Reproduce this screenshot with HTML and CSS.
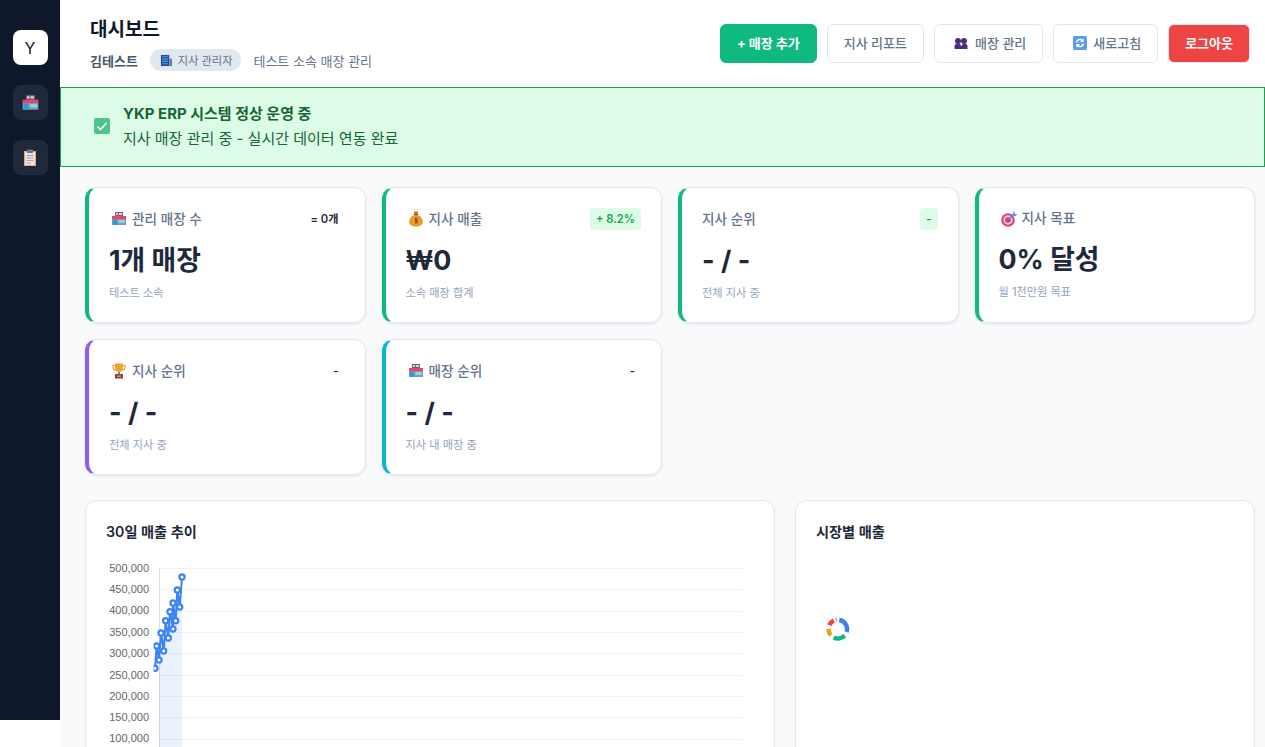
FILE: index.html
```html
<!DOCTYPE html>
<html lang="ko">
<head>
<meta charset="utf-8">
<title>대시보드</title>
<link rel="stylesheet" href="styles.css">
</head>
<body>
<svg class="defs" width="0" height="0" aria-hidden="true">
  <symbol id="i-store" viewBox="0 0 20 16">
    <rect x="6" y="1" width="8" height="4" fill="#6f6478"/>
    <rect x="7" y="2" width="2" height="2" fill="#d9d4dd"/><rect x="10" y="2" width="3" height="2" fill="#d9d4dd"/>
    <rect x="3" y="5" width="14" height="3" fill="#f0416c"/>
    <rect x="3" y="8" width="14" height="6" fill="#8f93a6"/>
    <rect x="4" y="8.500" width="4" height="5.500" fill="#1f9fe0"/>
    <rect x="9.500" y="9" width="6.500" height="3" fill="#74dcf4"/>
  </symbol>
  <symbol id="i-bag" viewBox="0 0 20 16">
    <rect x="8" y="0.500" width="4" height="2.500" rx="1" fill="#c9702a"/>
    <rect x="8" y="3" width="4" height="1.200" fill="#7c4a1e"/>
    <path d="M8 4h4c3 1.500 5 4 5 6.500C17 14 14 15.500 10 15.500S3 14 3 10.500C3 8 5 5.500 8 4z" fill="#f09a2c"/>
    <path d="M11.500 7.500H9.500v2h1.500v2H8.800" fill="none" stroke="#8a4b16" stroke-width="1.300"/>
  </symbol>
  <symbol id="i-target" viewBox="0 0 20 16">
    <circle cx="9" cy="9" r="6.800" fill="#e23f7c"/>
    <circle cx="9" cy="9" r="4.700" fill="#f5c6d6"/>
    <circle cx="9" cy="9" r="2.800" fill="#d63a70"/>
    <path d="M9 9l6-6" stroke="#3c8fe0" stroke-width="1.500"/>
    <path d="M13.500 2.500L15.500 0.500 16 3 18.500 3.500 16 5.500 13.500 4.500z" fill="#4aa3f0"/>
  </symbol>
  <symbol id="i-trophy" viewBox="0 0 20 16">
    <path d="M4 2.500h12v1.500c0 2-1.500 3-3 3H7C5.500 7 4 6 4 4z" fill="none" stroke="#eca22e" stroke-width="1.200"/>
    <path d="M6 0.500h8v4c0 3-2 4.500-4 4.500S6 7.500 6 4.500z" fill="#f2a430"/>
    <rect x="9" y="9" width="2" height="2" fill="#c9761f"/>
    <rect x="6" y="11" width="8" height="4.500" fill="#7c3f55"/>
    <rect x="8" y="12.500" width="4" height="1.300" fill="#e8b04a"/>
  </symbol>
  <symbol id="i-clip" viewBox="0 0 14 18">
    <rect x="1" y="2" width="12" height="15" fill="#eea35a"/>
    <rect x="2" y="3" width="10" height="13" fill="#e8e3ea"/>
    <rect x="4" y="0.500" width="6" height="3.500" fill="#77737f"/>
    <path d="M3.500 6.500h7M3.500 9h7M3.500 11.500h7M3.500 14h4" stroke="#a8a4b4" stroke-width="1"/>
  </symbol>
  <symbol id="i-office" viewBox="0 0 14 14">
    <rect x="1" y="1" width="9" height="12" fill="#2a4a9c"/>
    <rect x="10" y="5" width="3" height="8" fill="#6c7fa8"/>
    <path d="M2.500 3h6M2.500 5.500h6M2.500 8h6M2.500 10.500h6" stroke="#45a6e8" stroke-width="1.200"/>
  </symbol>
  <symbol id="i-check" viewBox="0 0 16 16">
    <rect width="16" height="16" rx="2" fill="#4dc48a"/>
    <path d="M3.500 8.500l3 3 6-6.500" fill="none" stroke="#fff" stroke-width="1.700"/>
  </symbol>
  <symbol id="i-people" viewBox="0 0 14 14">
    <circle cx="4" cy="5" r="3" fill="#4c2f78"/><circle cx="10" cy="5" r="3" fill="#4c2f78"/>
    <path d="M0.500 13V10C0.500 8.500 2 7.500 4 7.500S7 8.500 7 10 8 7.500 10 7.500 13.500 8.500 13.500 10V13z" fill="#4c2f78"/>
  </symbol>
  <symbol id="i-refresh" viewBox="0 0 14 14">
    <rect width="14" height="14" rx="2" fill="#5b9cf0"/>
    <path d="M3.500 6.500A3.600 3.600 0 0 1 10 5M10.500 7.500A3.600 3.600 0 0 1 4 9" fill="none" stroke="#fff" stroke-width="1.500"/>
    <path d="M10.500 2.500v3.500H7zM3.500 11.500V8H7z" fill="#fff"/>
  </symbol>
</svg>
<div class="app">
  <nav class="sidebar">
    <div class="side-btn logo">Y</div>
    <div class="side-btn"><svg class="side-store"><use href="#i-store"/></svg></div>
    <div class="side-btn"><svg class="side-clip"><use href="#i-clip"/></svg></div>
  </nav>
  <main class="main">
    <header class="header">
      <div class="head-left">
        <h1 class="title">대시보드</h1>
        <div class="sub">
          <strong class="user">김테스트</strong>
          <span class="role"><svg class="role-ico"><use href="#i-office"/></svg>지사 관리자</span>
          <span class="desc">테스트 소속 매장 관리</span>
        </div>
      </div>
      <div class="actions">
        <button class="btn btn-green">+ 매장 추가</button>
        <button class="btn btn-white">지사 리포트</button>
        <button class="btn btn-white btn-ico btn-wide"><svg class="btn-svg"><use href="#i-people"/></svg>매장 관리</button>
        <button class="btn btn-white btn-ico"><svg class="btn-svg"><use href="#i-refresh"/></svg>새로고침</button>
        <button class="btn btn-red">로그아웃</button>
      </div>
    </header>
    <section class="banner">
      <svg class="banner-icon"><use href="#i-check"/></svg>
      <div class="banner-body">
        <div class="banner-title">YKP ERP 시스템 정상 운영 중</div>
        <div class="banner-text">지사 매장 관리 중 - 실시간 데이터 연동 완료</div>
      </div>
    </section>
    <div class="content">
      <section class="kpis">
        <article class="kpi">
          <div class="kpi-head"><span class="kpi-label"><svg class="kpi-ico"><use href="#i-store"/></svg>관리 매장 수</span><span class="kpi-delta">= 0개</span></div>
          <div class="kpi-value">1개 매장</div>
          <div class="kpi-note">테스트 소속</div>
        </article>
        <article class="kpi">
          <div class="kpi-head"><span class="kpi-label"><svg class="kpi-ico"><use href="#i-bag"/></svg>지사 매출</span><span class="kpi-delta chip">+ 8.2%</span></div>
          <div class="kpi-value">₩0</div>
          <div class="kpi-note">소속 매장 합계</div>
        </article>
        <article class="kpi">
          <div class="kpi-head"><span class="kpi-label">지사 순위</span><span class="kpi-delta chip">-</span></div>
          <div class="kpi-value">- / -</div>
          <div class="kpi-note">전체 지사 중</div>
        </article>
        <article class="kpi">
          <div class="kpi-head"><span class="kpi-label"><svg class="kpi-ico"><use href="#i-target"/></svg>지사 목표</span></div>
          <div class="kpi-value">0% 달성</div>
          <div class="kpi-note">월 1천만원 목표</div>
        </article>
        <article class="kpi kpi-purple">
          <div class="kpi-head"><span class="kpi-label"><svg class="kpi-ico"><use href="#i-trophy"/></svg>지사 순위</span><span class="kpi-delta">-</span></div>
          <div class="kpi-value">- / -</div>
          <div class="kpi-note">전체 지사 중</div>
        </article>
        <article class="kpi kpi-cyan">
          <div class="kpi-head"><span class="kpi-label"><svg class="kpi-ico"><use href="#i-store"/></svg>매장 순위</span><span class="kpi-delta">-</span></div>
          <div class="kpi-value">- / -</div>
          <div class="kpi-note">지사 내 매장 중</div>
        </article>
      </section>
      <section class="charts">
        <article class="chart-card">
          <h2 class="chart-title">30일 매출 추이</h2>
          <svg class="chart" width="648" height="200" viewBox="0 0 648 200">
            <defs><clipPath id="plot"><rect x="47.500" y="0" width="590" height="200"/></clipPath></defs>
            <g class="grid">
              <line x1="53" x2="636" y1="11.500" y2="11.500"/>
              <line x1="53" x2="636" y1="32.500" y2="32.500"/>
              <line x1="53" x2="636" y1="54.500" y2="54.500"/>
              <line x1="53" x2="636" y1="75.500" y2="75.500"/>
              <line x1="53" x2="636" y1="96.500" y2="96.500"/>
              <line x1="53" x2="636" y1="118.500" y2="118.500"/>
              <line x1="53" x2="636" y1="139.500" y2="139.500"/>
              <line x1="53" x2="636" y1="160.500" y2="160.500"/>
              <line x1="53" x2="636" y1="182.500" y2="182.500"/>
            </g>
            <line class="axis" x1="53.500" x2="53.500" y1="11" y2="200"/>
            <g class="ticks">
              <text x="43" y="15">500,000</text>
              <text x="43" y="36">450,000</text>
              <text x="43" y="57">400,000</text>
              <text x="43" y="79">350,000</text>
              <text x="43" y="100">300,000</text>
              <text x="43" y="122">250,000</text>
              <text x="43" y="143">200,000</text>
              <text x="43" y="164">150,000</text>
              <text x="43" y="185">100,000</text>
            </g>
            <polygon class="area" points="53,103 55,76 57.700,94 59.700,63.700 62.300,81 64,54.700 67,72 67,46 69.700,63.700 71.300,33 73.700,50 76,20 76,200 53,200"/>
            <g clip-path="url(#plot)">
              <polyline class="line" points="49,111.300 50.700,89 53,103 55,76 57.700,94 59.700,63.700 62.300,81 64,54.700 67,72 67,46 69.700,63.700 71.300,33 73.700,50 76,20"/>
              <g class="dots">
                <circle cx="49" cy="111.300" r="2.600"/><circle cx="50.700" cy="89" r="2.600"/><circle cx="53" cy="103" r="2.600"/>
                <circle cx="55" cy="76" r="2.600"/><circle cx="57.700" cy="94" r="2.600"/><circle cx="59.700" cy="63.700" r="2.600"/>
                <circle cx="62.300" cy="81" r="2.600"/><circle cx="64" cy="54.700" r="2.600"/><circle cx="67" cy="72" r="2.600"/>
                <circle cx="67" cy="46" r="2.600"/><circle cx="69.700" cy="63.700" r="2.600"/><circle cx="71.300" cy="33" r="2.600"/>
                <circle cx="73.700" cy="50" r="2.600"/><circle cx="76" cy="20" r="2.600"/>
              </g>
            </g>
          </svg>
        </article>
        <article class="chart-card">
          <h2 class="chart-title">시장별 매출</h2>
          <svg class="donut" width="24" height="24" viewBox="0 0 24 24">
            <path class="seg seg-blue" d="M13.300 3.100 A9 9 0 0 1 20.500 15.100"/>
            <path class="seg seg-green" d="M18.700 18.700 A9.500 9.500 0 0 1 7.700 20.500"/>
            <path class="seg seg-orange" d="M4.800 18.200 A9.500 9.500 0 0 1 2.500 12"/>
            <path class="seg seg-red" d="M3.300 8.100 A9.500 9.500 0 0 1 7.800 3.500"/>
            <path class="seg seg-purple" d="M9.500 2.800 A9.500 9.500 0 0 1 11.200 2.600"/>
          </svg>
        </article>
      </section>
    </div>
  </main>
</div>
</body>
</html>
```
FILE: styles.css
```css
* { box-sizing: border-box; }
html, body { margin: 0; height: 747px; overflow: hidden; background: #fff; }
body { font-family: Inter, "Noto Sans CJK KR", sans-serif; color: #1e293b; }
.defs { position: absolute; }
.app { display: flex; align-items: flex-start; }
.sidebar { width: 60px; height: 720px; flex: none; background: #0f172a; display: flex; flex-direction: column; align-items: center; gap: 20px; padding-top: 30px; }
.side-btn { width: 35px; height: 35px; border-radius: 8px; background: #1e293b; display: flex; align-items: center; justify-content: center; font-size: 16px; }
.side-btn.logo { background: #fff; color: #0f172a; }
.side-store { width: 23px; height: 18px; }
.side-clip { width: 14px; height: 18px; }
.main { flex: 1; min-width: 0; height: 747px; background: #f8fafc; }
.header { height: 87px; background: #fff; display: flex; justify-content: space-between; align-items: center; padding: 1px 15px 0 30px; }
.title { margin: 0 0 6px; font-size: 19px; line-height: 26px; font-weight: 700; color: #0f172a; }
.sub { display: flex; align-items: center; gap: 12px; font-size: 13px; color: #64748b; }
.user { font-weight: 700; color: #475569; }
.role { background: #e2e8f0; border-radius: 12px; padding: 0 9px 0 10px; font-size: 11.200px; height: 22px; display: flex; align-items: center; gap: 5px; }
.role-ico { width: 13px; height: 13px; }
.actions { display: flex; gap: 10px; margin-top: -1px; }
.btn { height: 39px; padding: 0 16px 2px; border-radius: 6px; font: inherit; font-size: 13px; font-weight: 500; border: 1px solid #e2e8f0; background: #fff; color: #64748b; }
.btn-ico { display: flex; align-items: center; gap: 6px; padding-left: 19px; }
.btn-wide { gap: 7px; }
.btn-svg { width: 14px; height: 14px; }
.btn-green { background: #10b981; border-color: #10b981; color: #fff; font-weight: 700; }
.btn-red { background: #ef4444; border-color: #e2e8f0; color: #fff; font-weight: 700; }
.banner { height: 80px; background: #dcfce7; border: 1px solid #16a34a; display: flex; align-items: center; gap: 13px; padding: 0 16px 0 33px; }
.banner-icon { width: 16px; height: 16px; flex: none; margin-bottom: 2px; }
.banner-body { padding-bottom: 1px; }
.banner-title { font-size: 15px; font-weight: 700; color: #166534; line-height: 24px; }
.banner-text { font-size: 15px; color: #166534; line-height: 24px; margin-top: 1px; }
.content { padding: 20px 10px 0 25px; }
.kpis { display: grid; grid-template-columns: repeat(4, 1fr); gap: 16px; margin-bottom: 25px; }
.kpi { height: 136px; background: #fff; border: 1px solid #e2e8f0; border-left: 4px solid #10b981; border-radius: 12px; padding: 20px; box-shadow: 0 1px 3px rgba(0,0,0,.1); }
.kpi-purple { border-left-color: #8b5cf6; }
.kpi-cyan { border-left-color: #06b6d4; }
.kpi-head { display: flex; justify-content: space-between; align-items: center; margin-bottom: 13px; }
.kpi-label { display: flex; align-items: center; gap: 3px; font-size: 13.600px; line-height: 21px; color: #64748b; font-weight: 500; }
.kpi-ico { width: 20px; height: 16px; }
.kpi-delta { font-size: 11.200px; line-height: 14px; font-weight: 600; color: #1e293b; padding: 4px 6px; border-radius: 4px; }
.kpi-delta.chip { background: #dcfce7; color: #16a34a; }
.kpi-value { font-size: 26.800px; font-weight: 700; line-height: 34px; margin-bottom: 8px; }
.kpi-note { font-size: 11.200px; color: #94a3b8; line-height: 16px; }
.charts { display: grid; grid-template-columns: 3fr 2fr; gap: 20px; }
.chart-card { height: 400px; background: #fff; border: 1px solid #e2e8f0; border-radius: 12px; padding: 20px; box-shadow: 0 1px 3px rgba(0,0,0,.05); }
.chart-title { margin: 0 0 15px; padding-top: 1px; font-size: 14.200px; font-weight: 600; line-height: 20px; color: #1e293b; }
.chart { display: block; }
.grid line { stroke: #eef2f7; stroke-width: 1; }
.axis { stroke: #d8dee8; stroke-width: 1; }
.ticks text { font-family: "Liberation Sans", sans-serif; font-size: 11px; fill: #666; text-anchor: end; }
.area { fill: rgba(59,130,246,.1); }
.line { fill: none; stroke: #3b82f6; stroke-width: 2; }
.dots circle { fill: #fff; stroke: #3b82f6; stroke-width: 2.200; }
.donut { display: block; margin: 75px 0 0 10px; }
.seg { fill: none; stroke-width: 4.500; }
.seg-blue { stroke: #3b82f6; }
.seg-green { stroke: #10b981; }
.seg-orange { stroke: #f59e0b; }
.seg-red { stroke: #ef4444; }
.seg-purple { stroke: #c4b5fd; }
```
